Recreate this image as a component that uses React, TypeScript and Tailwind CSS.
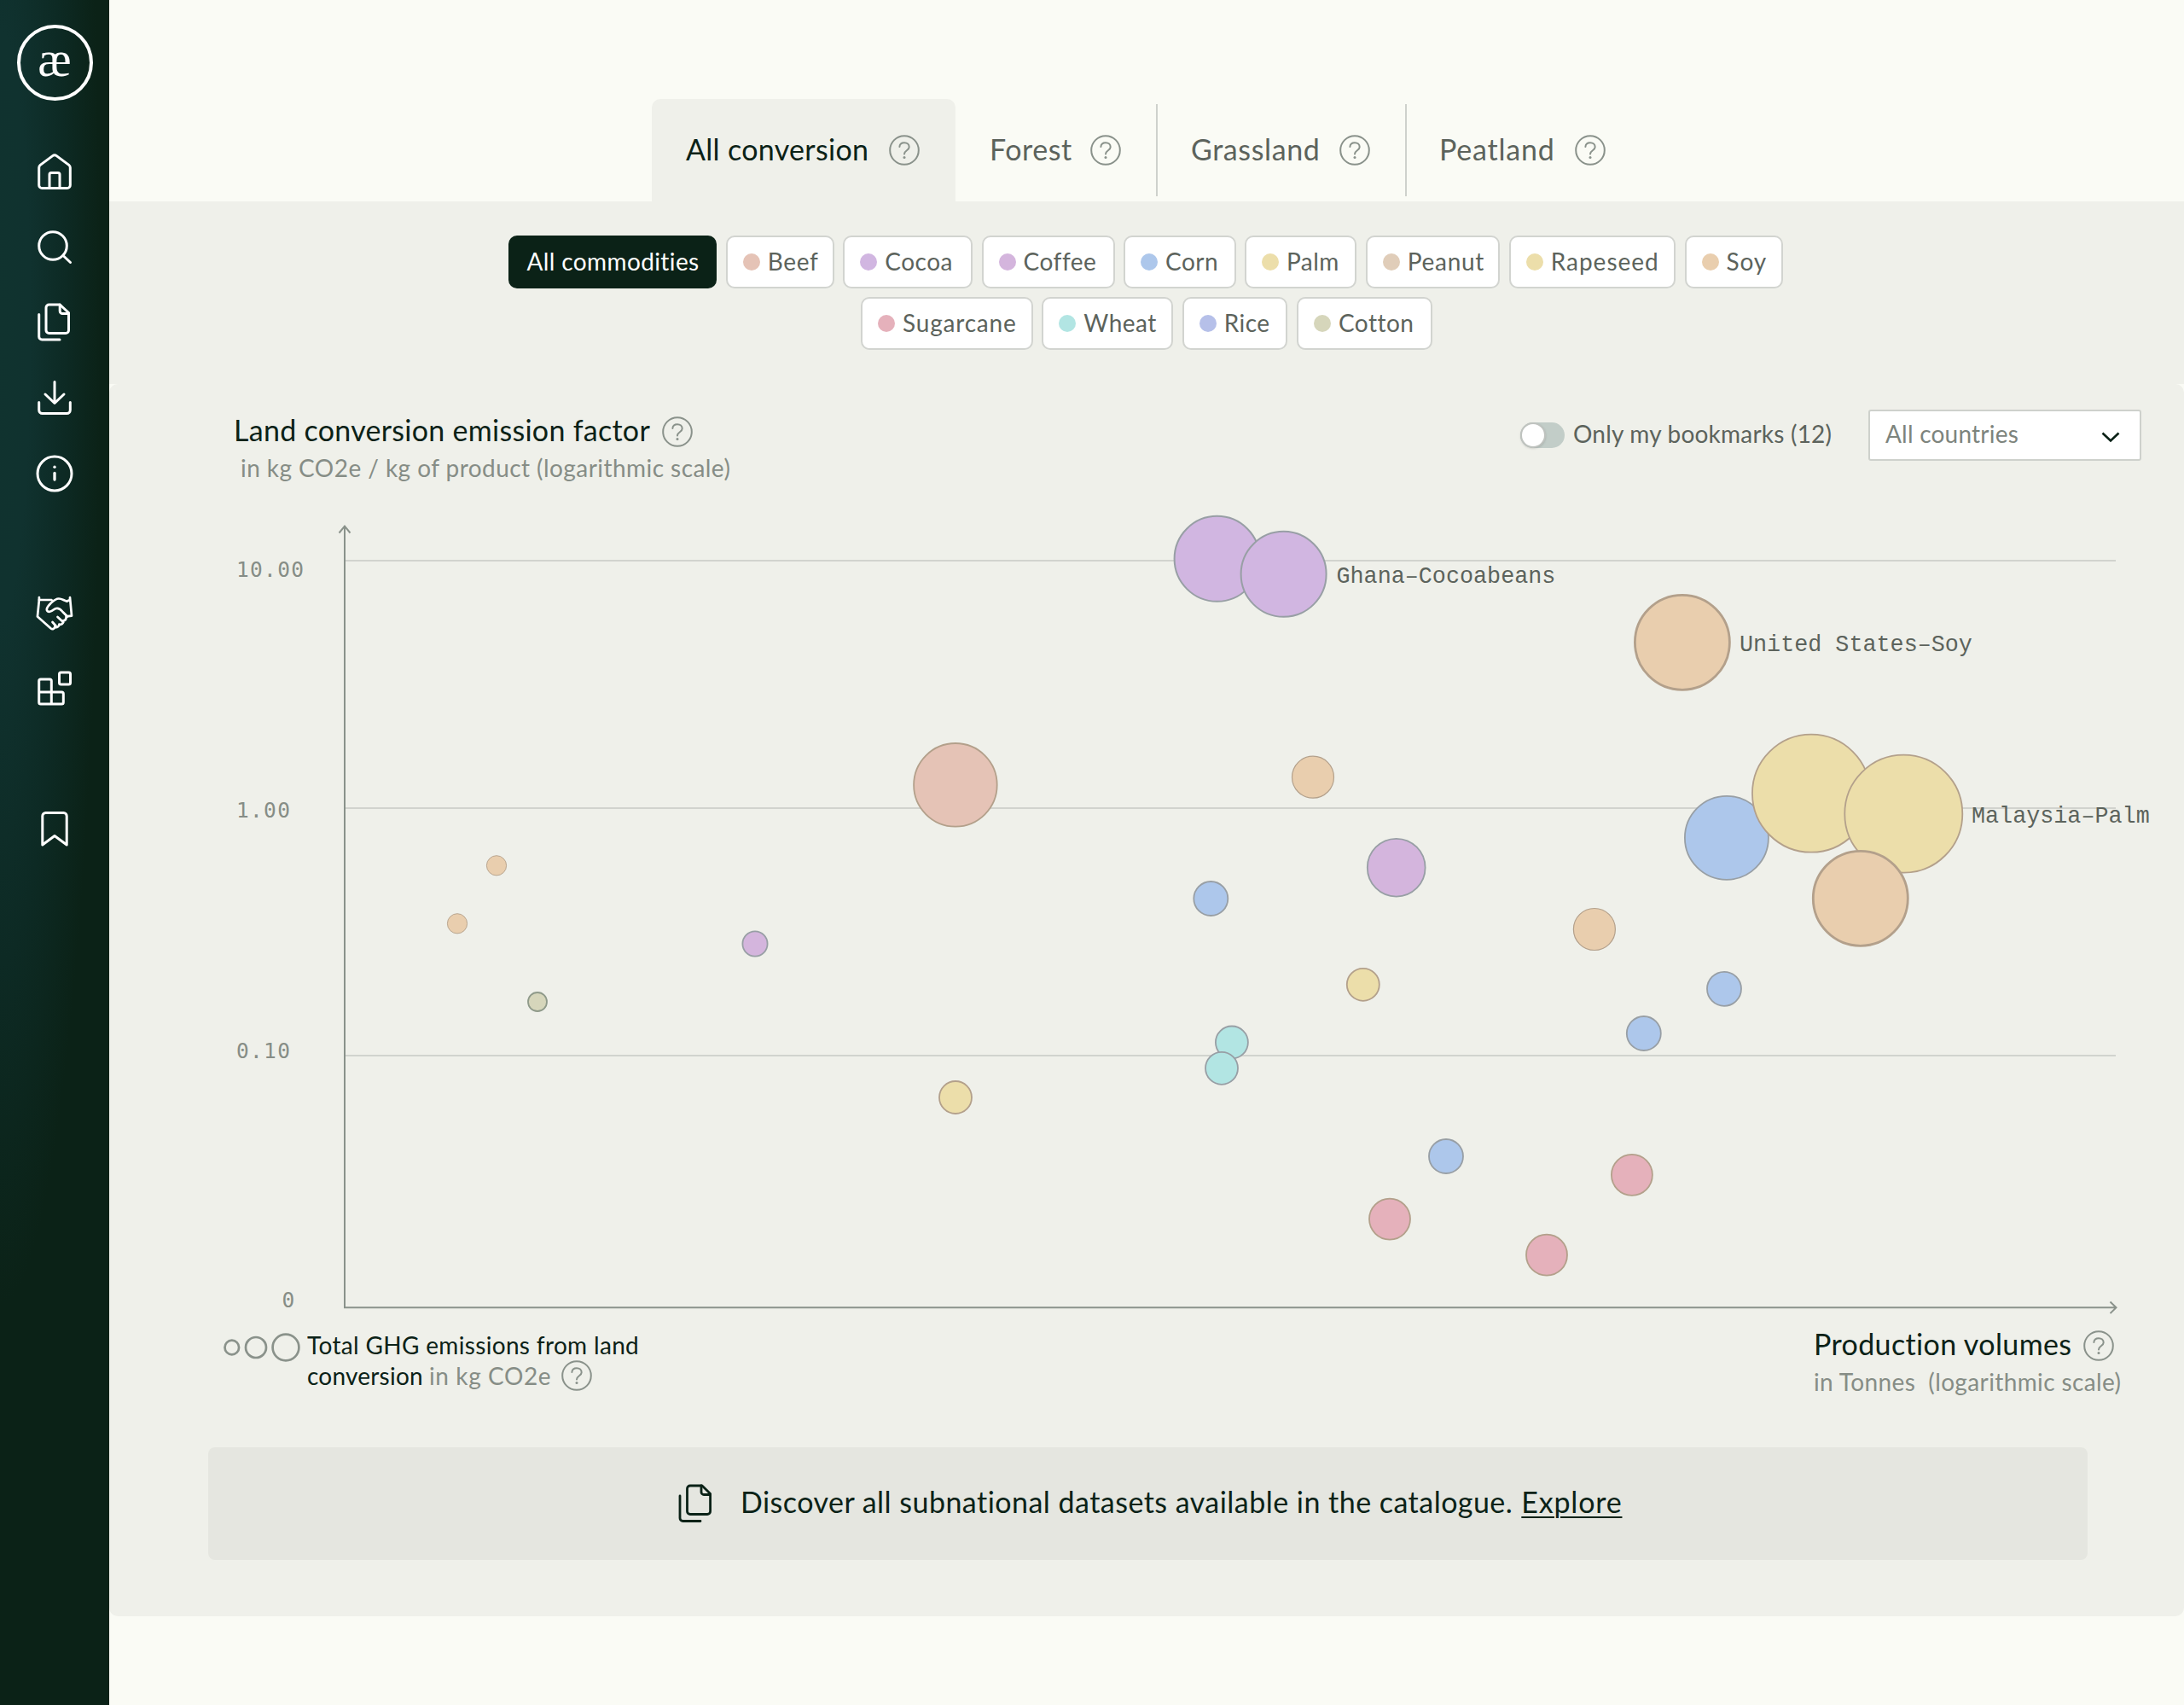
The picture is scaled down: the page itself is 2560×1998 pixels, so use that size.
import type { ReactNode } from "react";

const COLORS = {
  beef: "#e5c3b6",
  cocoa: "#d1b6e1",
  coffee: "#d4b5dd",
  corn: "#adc7eb",
  palm: "#ecdeaa",
  peanut: "#e0cdb9",
  soy: "#e9ceae",
  sugarcane: "#e5b1bb",
  wheat: "#b2e5e3",
  rice: "#b6c0e9",
  cotton: "#d6d6bb",
};

function HelpIcon({ className = "" }: { className?: string }) {
  return (
    <svg className={`h-9 w-9 shrink-0 ${className}`} viewBox="0 0 36 36" fill="none" stroke="#8a928b" strokeWidth="2" strokeLinecap="round">
      <circle cx="18" cy="18" r="16.8" />
      <path d="M12.4 14c.2-3 2.6-4.7 5.6-4.7 3.2 0 5.7 1.9 5.7 4.9 0 4-5.7 4-5.7 8.2" />
      <circle cx="18" cy="26.4" r="1.5" fill="#8a928b" stroke="none" />
    </svg>
  );
}

function FilesIcon({ className = "" }: { className?: string }) {
  return (
    <svg className={className} viewBox="0 0 40 46" fill="none" stroke="currentColor" strokeWidth="2.8" strokeLinecap="round" strokeLinejoin="round">
      <path d="M14 2h14l9.6 9.6V32a3.5 3.5 0 0 1-3.5 3.5H14A3.5 3.5 0 0 1 10.5 32V5.500A3.5 3.5 0 0 1 14 2Z" />
      <path d="M27 2v7.500a3 3 0 0 0 3 3h7.500" />
      <path d="M2 14v26a3.5 3.5 0 0 0 3.5 3.5H26" />
    </svg>
  );
}

function NavIcon({ children, className = "" }: { children: ReactNode; className?: string }) {
  return (
    <a href="#" className={`block h-12 w-12 ${className}`}>
      <svg className="h-12 w-12" viewBox="0 0 48 48" fill="none" stroke="#fff" strokeWidth="3" strokeLinecap="round" strokeLinejoin="round">
        {children}
      </svg>
    </a>
  );
}

function Sidebar() {
  return (
    <nav className="flex w-32 shrink-0 flex-col items-center bg-[#0b2217] bg-[radial-gradient(ellipse_118px_1150px_at_0px_380px,#10332f_0%,#10322f_30%,#0d2a24_65%,#0b2217_100%)] pt-[29px]">
      <div className="flex h-[89px] w-[89px] items-center justify-center rounded-full border-4 border-white">
        <span className="pb-[10px] font-['Liberation_Serif',serif] text-[59px] leading-[60px] text-white">æ</span>
      </div>
      <NavIcon className="mt-[59px]">
        <path d="M5.7 19.5a4 4 0 0 1 1.5-3.1L21.7 5.600a3.8 3.8 0 0 1 4.600 0l14.500 10.800a4 4 0 0 1 1.500 3.100V40a3.600 3.600 0 0 1-3.600 3.600H9.300A3.600 3.600 0 0 1 5.700 40Z" />
        <path d="M18 43.500V27.400a2 2 0 0 1 2-2h8a2 2 0 0 1 2 2v16.100" />
      </NavIcon>
      <NavIcon className="mt-[41px]">
        <circle cx="22" cy="22" r="16.300" />
        <path d="M34 33.500l8.500 8" />
      </NavIcon>
      <NavIcon className="mt-[39px]">
        <path d="M17.500 4h12.700L40.500 13.500V34a3.500 3.500 0 0 1-3.500 3.500H17.500A3.500 3.500 0 0 1 14 34V7.500A3.500 3.500 0 0 1 17.500 4Z" />
        <path d="M30.200 4v7.500a3 3 0 0 0 3 3h7.300M5.700 15.500V41.500a3.500 3.500 0 0 0 3.500 3.500H30" />
      </NavIcon>
      <NavIcon className="mt-[41px]">
        <path d="M24 5.500V30M13 20l11 10.500L35 20M5.700 29.500v9a4 4 0 0 0 4 4h28.600a4 4 0 0 0 4-4v-9" />
      </NavIcon>
      <NavIcon className="mt-[41px]">
        <circle cx="24" cy="24" r="20" />
        <path d="M24 23.500v7.500" strokeWidth="3.300" />
        <circle cx="24" cy="16.300" r="1.700" fill="#fff" stroke="none" />
      </NavIcon>
      <NavIcon className="mt-[116px]">
        <path d="M5.900 5v3l-2 19.500 15.500 13.700c2 1.600 4.500 1 5-2 2 1.800 5 .3 5-2.700 2.700 1 5.200-.8 4.700-4.100 2.600-.2 3.700-2 3.500-5l6.400-.8L42 5v3l-3.600 1.500" strokeWidth="2.700" />
        <path d="M5.900 8h14.500M38.400 9.500c-3.500-.5-5.500-3-9.500-3-4 0-6.400 2.500-9.500 5.500-2.500 2.500-4.400 4.500-4.600 7-.1 2.300 1.700 3.200 3.700 2.800 4.500-1 4.500-4 8.500-4 3.500 0 5 2.500 6.500 4.200l5.500 5.500M27.500 28l6.600 6M21.500 34l4 4.500" strokeWidth="2.700" />
      </NavIcon>
      <NavIcon className="mt-[41px]">
        <rect x="29.500" y="4" width="13" height="14" rx="2" />
        <path d="M5.700 27V14a2 2 0 0 1 2-2h10.600a2 2 0 0 1 2 2v13M5.700 27V39a2 2 0 0 0 2 2h24.600a2 2 0 0 0 2-2V29a2 2 0 0 0-2-2ZM20.300 27v14" />
      </NavIcon>
      <NavIcon className="mt-[116px]">
        <path d="M9.800 42V8.300a3.700 3.700 0 0 1 3.700-3.700h21a3.700 3.700 0 0 1 3.700 3.700V42L24 31.500Z" />
      </NavIcon>
    </nav>
  );
}

function Tabs() {
  return (
    <div className="flex h-[236px] items-end justify-center pr-[3px] text-[34px] leading-10 text-[#5c635c]">
      <div className="flex h-[120px] w-[356px] items-center rounded-t-[10px] bg-[#eff0ea] pl-10 text-[#0b2217]">
        <span className="w-[238px] pb-[2px] tracking-[0.31px]">All conversion</span>
        <HelpIcon />
      </div>
      <div className="flex h-[120px] w-[235px] items-center pl-10">
        <span className="w-[118px] pb-[2px] tracking-[0.5px]">Forest</span>
        <HelpIcon />
      </div>
      <div className="mb-[6px] flex h-[108px] w-[292px] items-center border-l-2 border-[#ced1cc] pl-[39px]">
        <span className="w-[174px] pb-[2px] tracking-[0.6px]">Grassland</span>
        <HelpIcon />
      </div>
      <div className="mb-[6px] flex h-[108px] w-[274px] items-center border-l-2 border-[#ced1cc] pl-[38px]">
        <span className="w-[159px] pb-[2px] tracking-[0.8px]">Peatland</span>
        <HelpIcon />
      </div>
    </div>
  );
}

function Chip({ label, color, className }: { label: string; color: string; className: string }) {
  return (
    <button className={`flex h-[62px] items-center gap-[9px] rounded-[10px] border-2 border-[#d2d4d0] bg-white pl-[18px] ${className}`}>
      <span className="h-5 w-5 shrink-0 rounded-full" style={{ backgroundColor: color }} />
      <span className="pb-[3px]">{label}</span>
    </button>
  );
}

function CommodityFilters() {
  return (
    <div className="flex h-[214px] flex-col items-center gap-[10px] bg-[#eff0ea] pt-10 text-[28px] leading-9 text-[#5c635c]">
      <div className="flex gap-[10.4px] pr-[2px]">
        <button className="flex h-[62px] w-[244px] items-center rounded-[10px] bg-[#0b2217] pl-[21px] text-white">
          <span className="pb-[3px] tracking-[0.39px]">All commodities</span>
        </button>
        <Chip label="Beef" color={COLORS.beef} className="w-[127px] tracking-[0.6px]" />
        <Chip label="Cocoa" color={COLORS.cocoa} className="w-[152px] tracking-[0.5px]" />
        <Chip label="Coffee" color={COLORS.coffee} className="w-[156px] tracking-[0.5px]" />
        <Chip label="Corn" color={COLORS.corn} className="w-[131.5px] tracking-[0.5px]" />
        <Chip label="Palm" color={COLORS.palm} className="w-[131.5px] tracking-[0.5px]" />
        <Chip label="Peanut" color={COLORS.peanut} className="w-[157.500px] tracking-[0.7px]" />
        <Chip label="Rapeseed" color={COLORS.palm} className="w-[195.500px] tracking-[1px]" />
        <Chip label="Soy" color={COLORS.soy} className="w-[115px] tracking-[0.8px]" />
      </div>
      <div className="flex gap-[10.8px]">
        <Chip label="Sugarcane" color={COLORS.sugarcane} className="w-[201.5px] tracking-[0.8px]" />
        <Chip label="Wheat" color={COLORS.wheat} className="w-[153.5px] tracking-[0.5px]" />
        <Chip label="Rice" color={COLORS.rice} className="w-[123.5px] tracking-[0.5px]" />
        <Chip label="Cotton" color={COLORS.cotton} className="w-[159px] tracking-[0.5px]" />
      </div>
    </div>
  );
}

function ChartHeader() {
  return (
    <div className="flex h-[150px] items-start justify-between pl-[146px] pr-[50px] pt-[30px]">
      <div className="pt-1">
        <h2 className="flex h-[44px] text-[34px] leading-10 tracking-[0.28px] text-[#0b2217]">
          Land conversion emission factor
          <HelpIcon className="ml-[14px] mt-1" />
        </h2>
        <p className="pl-2 text-[28px] leading-10 tracking-[0.44px] text-[#868d86]">in kg CO2e / kg of product (logarithmic scale)</p>
      </div>
      <div className="flex h-[60px] items-center text-[28px] leading-9">
        <div className="flex h-[30px] w-[52px] items-center rounded-full bg-[#c2cdc8]">
          <span className="h-[30px] w-[30px] rounded-full border-2 border-[#bfc3bf] bg-white shadow-sm" />
        </div>
        <span className="w-[356px] pb-[5px] pl-[10px] tracking-[0.21px] text-[#5c635c]">Only my bookmarks (12)</span>
        <div className="flex h-[60px] w-80 items-center justify-between rounded-[3px] border-2 border-[#ced1cc] bg-white pl-[18px] pr-[22px] text-[#7d847d]">
          <span className="pb-[5px] tracking-[0.22px]">All countries</span>
          <svg className="mt-[3px] h-6 w-6" viewBox="0 0 24 24" fill="none" stroke="#0b2217" strokeWidth="2.7">
            <path d="M2.5 7.5l9.5 9 9.5-9" />
          </svg>
        </div>
      </div>
    </div>
  );
}

const WARM = "#b3a08b";
const COOL = "#989fa5";

const BUBBLES: [x: number, y: number, r: number, fill: string, stroke: string, width: number][] = [
  [1426.6, 654.8, 50, COLORS.cocoa, COOL, 2],
  [1504.6, 672.8, 50, COLORS.cocoa, COOL, 2],
  [1971.9, 752.8, 55.5, COLORS.soy, WARM, 2.8],
  [1119.9, 919.8, 48.8, COLORS.beef, WARM, 1.8],
  [1539, 910.7, 24.5, COLORS.soy, WARM, 1.2],
  [2023.9, 981.8, 49, COLORS.corn, COOL, 1.8],
  [2123, 929.7, 69, COLORS.palm, WARM, 1.8],
  [2231.3, 953.7, 69, COLORS.palm, WARM, 1.8],
  [2180.8, 1052.8, 55.5, COLORS.soy, WARM, 2.8],
  [1636.7, 1016.7, 33.9, COLORS.coffee, COOL, 1.8],
  [1419.3, 1053, 20, COLORS.corn, COOL, 1.8],
  [1868.9, 1089, 24.5, COLORS.soy, WARM, 1.2],
  [1597.8, 1153.8, 19, COLORS.palm, WARM, 1.8],
  [1443.9, 1221.5, 19, COLORS.wheat, COOL, 1.8],
  [1432, 1251.8, 19, COLORS.wheat, COOL, 1.8],
  [1926.8, 1211, 20, COLORS.corn, COOL, 1.8],
  [2021, 1158.8, 20, COLORS.corn, COOL, 1.8],
  [1120, 1286, 19, COLORS.palm, WARM, 1.8],
  [1695, 1355, 20, COLORS.corn, COOL, 1.8],
  [1912.9, 1376.8, 24, COLORS.sugarcane, WARM, 1.8],
  [1629, 1428.6, 24, COLORS.sugarcane, WARM, 1.8],
  [1813, 1470.7, 24, COLORS.sugarcane, WARM, 1.8],
  [582, 1014.3, 11.6, COLORS.soy, WARM, 0.9],
  [536, 1082.3, 11.6, COLORS.soy, WARM, 0.9],
  [885, 1106, 14.6, COLORS.coffee, COOL, 1.8],
  [630, 1174, 11, COLORS.cotton, "#8f9a8a", 1.8],
];

function BubbleChart() {
  return (
    <svg className="block h-[950px] w-[2432px]" viewBox="128 600 2432 950">
      <path d="M404 657H2480M404 947H2480M404 1237H2480" stroke="#d1d3ce" strokeWidth="2" />
      <path d="M404 1532.3V617M397.5 624.5l6.5-8 6.5 8M403 1532.3H2480M2473.5 1525.5l7 6.800-7 6.800" stroke="#8a928b" strokeWidth="2" fill="none" />
      <g className="font-['DejaVu_Sans_Mono',monospace] text-[24.5px] tracking-[1.3px]" fill="#868d86">
        <text x="277" y="676">10.00</text>
        <text x="277" y="957.5">1.00</text>
        <text x="277" y="1239.5">0.10</text>
        <text x="330.5" y="1531.5">0</text>
      </g>
      {BUBBLES.map(([x, y, r, fill, stroke, width], i) => (
        <circle key={i} cx={x} cy={y} r={r} fill={fill} stroke={stroke} strokeWidth={width} />
      ))}
      <g className="font-['Liberation_Mono',monospace] text-[26.75px]" fill="#5c635c">
        <text x="1566.5" y="683">Ghana–Cocoabeans</text>
        <text x="2039" y="763">United States–Soy</text>
        <text x="2311" y="963.5">Malaysia–Palm</text>
      </g>
    </svg>
  );
}

function Legend() {
  return (
    <div className="flex h-[146px] items-start justify-between pl-[132px]">
      <div className="flex items-start pt-2">
        <svg className="mt-[3px] h-9 w-24" viewBox="0 0 96 36" fill="none" stroke="#8a928b" strokeWidth="2.7">
          <circle cx="11.8" cy="18" r="8.3" />
          <circle cx="40" cy="18" r="12" />
          <circle cx="75" cy="18" r="15.4" />
        </svg>
        <div className="pl-1 text-[28px] leading-9 text-[#0b2217]">
          <p className="tracking-[0.33px]">Total GHG emissions from land</p>
          <p className="flex">
            <span className="w-[143px] tracking-[0.22px]">conversion</span>
            <span className="w-[155px] tracking-[0.6px] text-[#868d86]">in kg CO2e</span>
            <HelpIcon />
          </p>
        </div>
      </div>
      <div className="w-[435px] pt-[5px]">
        <h3 className="flex h-[44px] text-[34px] leading-10 text-[#0b2217]">
          <span className="w-[317px] pl-[1px] tracking-[0.37px]">Production volumes</span>
          <HelpIcon className="mt-1" />
        </h3>
        <p className="whitespace-pre pl-[1px] text-[28px] leading-10 tracking-[0.38px] text-[#868d86]">in Tonnes  (logarithmic scale)</p>
      </div>
    </div>
  );
}

function CatalogueBanner() {
  return (
    <div className="ml-[116px] flex h-[132px] w-[2203px] items-center rounded-lg bg-[#e5e6e0] pl-[551px] text-[34px] leading-10 text-[#0b2217]">
      <FilesIcon className="h-[46px] w-10" />
      <p className="pb-[5px] pl-[33px] tracking-[0.47px]">
        Discover all subnational datasets available in the catalogue.
      </p>
      <a href="#" className="mb-[5px] ml-[10px] tracking-[0.8px] underline decoration-2 underline-offset-[4px]">
        Explore
      </a>
    </div>
  );
}

export default function App() {
  return (
    <div className="flex h-[1998px] w-[2560px] overflow-hidden bg-[#fafbf5] font-['Lato',sans-serif]">
      <Sidebar />
      <main className="w-[2432px]">
        <Tabs />
        <CommodityFilters />
        <section className="h-[1444px] rounded-[10px] bg-[#eff0ea]">
          <ChartHeader />
          <BubbleChart />
          <Legend />
          <CatalogueBanner />
        </section>
      </main>
    </div>
  );
}
